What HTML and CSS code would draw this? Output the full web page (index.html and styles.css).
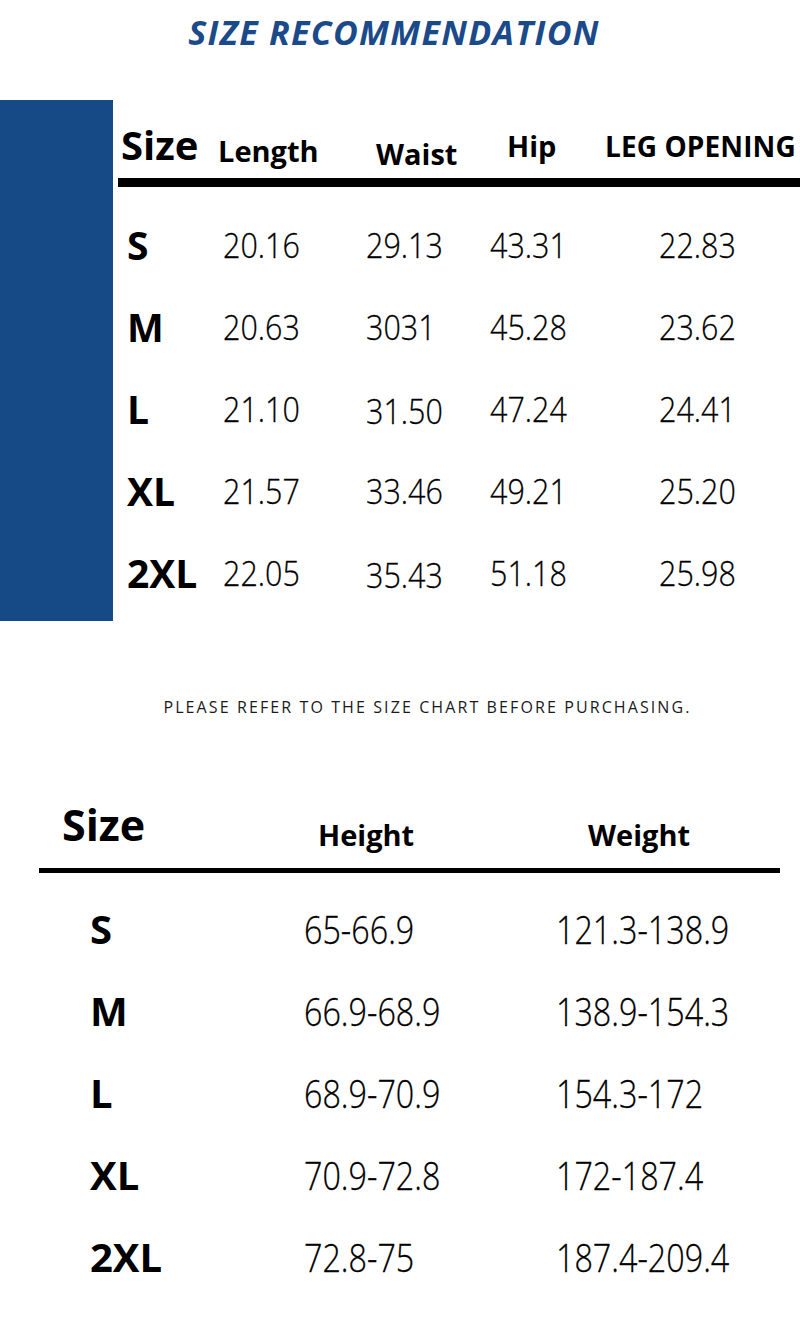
FILE: index.html
```html
<!DOCTYPE html>
<html lang="en">
<head>
<meta charset="utf-8">
<title>Size Recommendation</title>
<link rel="stylesheet" href="styles.css">
</head>
<body>
<div class="page">
  <h1 class="title">SIZE RECOMMENDATION</h1>

  <section class="chart">
    <div class="band"></div>
    <div class="table">
      <div class="thead">
        <div class="th th-size">Size</div>
        <div class="th th-length">Length</div>
        <div class="th th-waist">Waist</div>
        <div class="th th-hip">Hip</div>
        <div class="th th-leg">LEG OPENING</div>
      </div>
      <div class="rule"></div>
      <div class="tbody">
        <div class="tr"><div class="sz">S</div><div class="num">20.16</div><div class="num">29.13</div><div class="num">43.31</div><div class="num">22.83</div></div>
        <div class="tr"><div class="sz">M</div><div class="num">20.63</div><div class="num">3031</div><div class="num">45.28</div><div class="num">23.62</div></div>
        <div class="tr"><div class="sz">L</div><div class="num">21.10</div><div class="num low">31.50</div><div class="num">47.24</div><div class="num">24.41</div></div>
        <div class="tr"><div class="sz">XL</div><div class="num">21.57</div><div class="num">33.46</div><div class="num">49.21</div><div class="num">25.20</div></div>
        <div class="tr"><div class="sz">2XL</div><div class="num">22.05</div><div class="num low">35.43</div><div class="num">51.18</div><div class="num">25.98</div></div>
      </div>
    </div>
  </section>

  <p class="note">PLEASE REFER TO THE SIZE CHART BEFORE PURCHASING.</p>

  <section class="chart2">
    <div class="thead2">
      <div class="th2 th2-size">Size</div>
      <div class="th2 th2-h">Height</div>
      <div class="th2 th2-w">Weight</div>
    </div>
    <div class="rule2"></div>
    <div class="tbody2">
      <div class="tr2"><div class="sz2">S</div><div class="num2">65-66.9</div><div class="num2">121.3-138.9</div></div>
      <div class="tr2"><div class="sz2">M</div><div class="num2">66.9-68.9</div><div class="num2">138.9-154.3</div></div>
      <div class="tr2"><div class="sz2">L</div><div class="num2">68.9-70.9</div><div class="num2">154.3-172</div></div>
      <div class="tr2"><div class="sz2">XL</div><div class="num2">70.9-72.8</div><div class="num2">172-187.4</div></div>
      <div class="tr2"><div class="sz2">2XL</div><div class="num2">72.8-75</div><div class="num2">187.4-209.4</div></div>
    </div>
  </section>
</div>
</body>
</html>
```

FILE: styles.css
```css
* { box-sizing: border-box; }

html, body {
  margin: 0;
  padding: 0;
  background: #ffffff;
}

body {
  font-family: "Open Sans", "Noto Sans", "Liberation Sans", sans-serif;
  color: #000;
}

.page {
  width: 800px;
  height: 1320px;
  overflow: hidden;
}

.title {
  margin: 0;
  height: 100px;
  padding-top: 10px;
  padding-right: 12px;
  text-align: center;
  font-size: 34px;
  line-height: 45px;
  font-weight: 700;
  font-style: italic;
  color: #1b4a8b;
  letter-spacing: 1.3px;
}

/* ---------- first chart ---------- */
.chart {
  display: flex;
  height: 521px;
}

.band {
  width: 113px;
  flex: none;
  background: #164a86;
}

.table {
  flex: 1;
  margin-left: 5px;
  display: flex;
  flex-direction: column;
}

.thead {
  height: 78px;
  display: grid;
  grid-template-columns: 97px 158px 131px 98px 1fr;
  align-items: end;
  padding-left: 3px;
  padding-bottom: 13px;
}

.th {
  font-weight: 700;
  font-size: 30px;
  line-height: 1;
  white-space: nowrap;
}

.th-size { font-size: 40px; }
.th-length { font-size: 29px; }
.th-waist { font-size: 29px; margin-bottom: -3px; }
.th-hip { font-size: 29px; margin-bottom: 5px; }
.th-leg { font-size: 28px; margin-bottom: 5px; letter-spacing: 0.1px; }

.rule {
  height: 9px;
  background: #000;
}

.tbody {
  padding-top: 16px;
  display: flex;
  flex-direction: column;
}

.tr {
  height: 82px;
  display: grid;
  grid-template-columns: 105px 143px 124px 169px 1fr;
  align-items: center;
}

.sz {
  padding-left: 9px;
  font-weight: 700;
  font-size: 39px;
  line-height: 1;
}

.num {
  font-weight: 300;
  font-size: 35px;
  line-height: 1;
  white-space: nowrap;
  color: #000;
  -webkit-text-stroke: 0.3px #000;
  transform: scaleX(0.87);
  transform-origin: left center;
}

.num.low { margin-top: 4px; }

/* ---------- note ---------- */
.note {
  margin: 0;
  padding-top: 78px;
  padding-left: 55px;
  height: 147px;
  text-align: center;
  font-size: 16px;
  line-height: 1;
  letter-spacing: 2.1px;
  color: #1a1a1a;
}

/* ---------- second chart ---------- */
.chart2 {
  margin-left: 39px;
  width: 741px;
}

.thead2 {
  height: 100px;
  display: grid;
  grid-template-columns: 279px 270px 1fr;
  align-items: end;
  padding-bottom: 22px;
}

.th2 {
  font-weight: 700;
  font-size: 29px;
  line-height: 1;
  white-space: nowrap;
}

.th2-size {
  font-size: 43px;
  padding-left: 23px;
}

.th2-h, .th2-w { margin-bottom: -3px; }

.rule2 {
  height: 5px;
  background: #000;
}

.tbody2 {
  padding-top: 15px;
  display: flex;
  flex-direction: column;
}

.tr2 {
  height: 82px;
  display: grid;
  grid-template-columns: 265px 252px 1fr;
  align-items: center;
}

.sz2 {
  padding-left: 51px;
  font-weight: 700;
  font-size: 40px;
  line-height: 1;
}

.num2 {
  font-weight: 300;
  font-size: 38px;
  line-height: 1;
  white-space: nowrap;
  -webkit-text-stroke: 0.3px #000;
  transform: scaleX(0.85);
  transform-origin: left center;
}
```
